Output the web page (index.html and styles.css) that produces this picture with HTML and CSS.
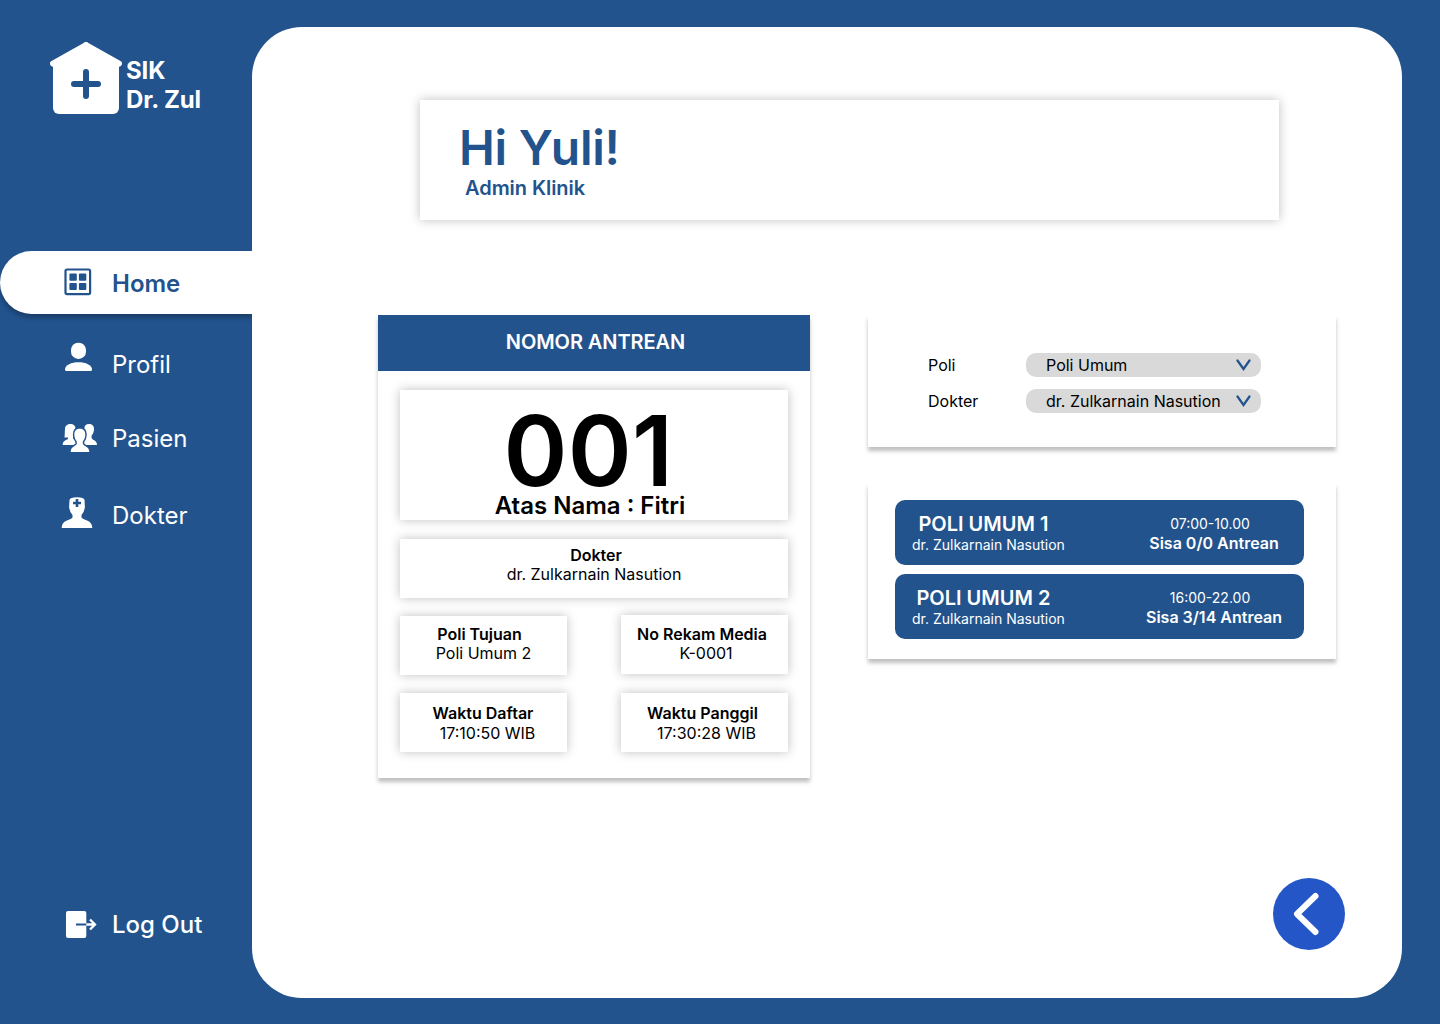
FILE: index.html
```html
<!DOCTYPE html>
<html lang="id">
<head>
<meta charset="utf-8">
<title>SIK Dr. Zul</title>
<link rel="stylesheet" href="styles.css">
</head>
<body>
<div class="app">
  <aside class="sidebar">
    <div class="logo">
      <svg width="72" height="72" viewBox="0 0 72 72"><path d="M36 3 69 21.500M36 3 3 21.500" stroke="#fff" stroke-width="6" stroke-linecap="round"/><path d="M36 2 69 20v46a6 6 0 0 1-6 6H9a6 6 0 0 1-6-6V20Z" fill="#fff"/><path d="M36 30v24M24 42h24" stroke="#22538d" stroke-width="6" stroke-linecap="round"/></svg>
      <div class="logo-text">SIK<br>Dr. Zul</div>
    </div>
    <nav class="nav">
      <a class="nav-item active">
        <svg class="icon" width="36" height="36" viewBox="0 0 36 36"><rect x="5.500" y="4.500" width="24.600" height="24.600" rx="1.500" fill="none" stroke="#22538d" stroke-width="2.200"/><g fill="#22538d"><rect x="9.400" y="8.500" width="7.400" height="7.200" rx="1"/><rect x="18.900" y="8.500" width="7.400" height="7.200" rx="1"/><rect x="9.400" y="17.900" width="7.400" height="7.200" rx="1"/><rect x="18.900" y="17.900" width="7.400" height="7.200" rx="1"/></g></svg>
        <span>Home</span>
      </a>
      <a class="nav-item profile">
        <svg class="icon" width="36" height="36" viewBox="0 0 36 36"><g fill="#fff"><rect x="11" y="2.700" width="15" height="16.300" rx="7.300"/><path d="M5 29.500C5 25 11.500 22.300 18.500 22.300S32 25 32 29.500Q32 31 30.500 31H6.500Q5 31 5 29.500Z"/></g></svg>
        <span>Profil</span>
      </a>
      <a class="nav-item patient">
        <svg class="icon wide" width="38" height="36" viewBox="0 0 38 36"><g fill="#fff"><path d="M5 9C5 5.500 7.500 4 10.500 4S15.500 5.500 15.500 9C15.500 12 14.500 14 13 15.500V18C14 20 18 20 18 25H2.700C2.700 21 6 20 8 19V17.500H4.500C5 14 4.600 12 5 9Z"/><path d="M24.300 9C24.300 5.500 26 4 29 4S34 5.500 34 9C34 12 33 14 31.600 15.500V18C32.500 20.500 37 20 37 25H22V18Z"/><path d="M14.300 14.500C14.300 10.500 16.500 8.700 19.800 8.700S25.300 10.500 25.300 14.500C25.300 17.500 24.300 19.700 22.800 21.400V24C24.300 26.500 29.300 26.500 29.300 32H10.700C10.700 26.500 15.300 26.500 16.800 24V21.400C15.300 19.700 14.300 17.500 14.300 14.500Z" stroke="#22538d" stroke-width="3" paint-order="stroke"/></g></svg>
        <span>Pasien</span>
      </a>
      <a class="nav-item doctor">
        <svg class="icon" width="36" height="36" viewBox="0 0 36 36"><path d="M9.500 5Q10 2.300 17 2.300T24.500 5L24.900 12Q24.500 16.500 21.500 20V22.500C23.500 25.500 32.300 24.500 32.300 33H1.700C1.700 24.500 10.500 25.500 12.500 22.500V20Q9.500 16.500 9.100 12Z" fill="#fff"/><path d="M17 4v8M13 8h8" stroke="#22538d" stroke-width="2.600"/></svg>
        <span>Dokter</span>
      </a>
    </nav>
    <a class="nav-item logout">
      <svg class="icon" width="37" height="36" viewBox="0 0 37 36"><rect x="6" y="5" width="20.300" height="27" rx="2" fill="#fff"/><path d="M16 18.500h10.300" stroke="#22538d" stroke-width="2"/><path d="M26.300 18.500h9M30 13.500l5 5-5 5" fill="none" stroke="#fff" stroke-width="2.300"/></svg>
      <span>Log Out</span>
    </a>
  </aside>
  <main class="panel">
    <header class="greeting">
      <h1>Hi Yuli!</h1>
      <p>Admin Klinik</p>
    </header>
    <div class="columns">
      <section class="ticket">
        <h2>NOMOR ANTREAN</h2>
        <div class="ticket-body">
          <div class="box number"><div class="digits">001</div><div class="owner">Atas Nama : Fitri</div></div>
          <div class="box doctor-box"><b>Dokter</b><span>dr. Zulkarnain Nasution</span></div>
          <div class="box clinic"><b>Poli Tujuan</b><span>Poli Umum 2</span></div>
          <div class="box record"><b>No Rekam Media</b><span>K-0001</span></div>
          <div class="box registered"><b>Waktu Daftar</b><span>17:10:50 WIB</span></div>
          <div class="box called"><b>Waktu Panggil</b><span>17:30:28 WIB</span></div>
        </div>
      </section>
      <div class="side">
        <section class="filters">
          <div class="field"><label>Poli</label><div class="select"><span>Poli Umum</span><svg width="15" height="12" viewBox="0 0 15 12"><path d="M1.500 1.500 7.500 10l6-8.500" fill="none" stroke="#22538d" stroke-width="2.200" stroke-linecap="round"/></svg></div></div>
          <div class="field"><label>Dokter</label><div class="select"><span>dr. Zulkarnain Nasution</span><svg width="15" height="12" viewBox="0 0 15 12"><path d="M1.500 1.500 7.500 10l6-8.500" fill="none" stroke="#22538d" stroke-width="2.200" stroke-linecap="round"/></svg></div></div>
        </section>
        <section class="schedule">
          <div class="slot"><div class="slot-info"><b>POLI UMUM 1</b><span>dr. Zulkarnain Nasution</span></div><div class="slot-queue"><span>07:00-10.00</span><b>Sisa 0/0 Antrean</b></div></div>
          <div class="slot"><div class="slot-info"><b>POLI UMUM 2</b><span>dr. Zulkarnain Nasution</span></div><div class="slot-queue"><span>16:00-22.00</span><b>Sisa 3/14 Antrean</b></div></div>
        </section>
      </div>
    </div>
    <button class="back" aria-label="Kembali"><svg width="72" height="72" viewBox="0 0 72 72"><path d="M42.500 18 24 36l18.500 18" fill="none" stroke="#fff" stroke-width="6" stroke-linecap="round" stroke-linejoin="round"/></svg></button>
  </main>
</div>
</body>
</html>
```
FILE: styles.css
```css
* { box-sizing: border-box; margin: 0; padding: 0; }
body { font: 400 16px/19px Inter, sans-serif; color: #000; background: #22538d; }
b { font-weight: 600; }
svg { display: block; flex: none; }
.app { display: flex; height: 1024px; overflow: hidden; }

.sidebar { width: 252px; flex: none; display: flex; flex-direction: column; color: #fff; }
.logo { display: flex; gap: 4px; padding: 42px 0 0 50px; height: 251px; }
.logo-text { font-size: 24px; line-height: 29px; font-weight: 700; letter-spacing: -.15px; padding-top: 14px; white-space: nowrap; }
.nav-item { display: flex; align-items: flex-start; gap: 16px; padding-left: 60px; font-size: 24px; line-height: 29px; font-weight: 400; }
.nav-item.active { height: 63px; padding-top: 14px; background: #fff; color: #22538d; font-weight: 600; border-radius: 32px 0 0 32px; box-shadow: 0 4px 4px rgba(0, 0, 0, .25); }
.active span { padding-top: 4px; }
.profile { margin-top: 26px; }
.profile span { padding-top: 10px; }
.patient { margin-top: 41px; }
.patient span { padding-top: 4px; }
.icon.wide { margin-right: -2px; }
.doctor { margin-top: 39px; }
.doctor span { padding-top: 6px; }
.logout { margin-top: auto; height: 118px; gap: 15px; font-weight: 500; }
.logout span { padding-top: 4px; }

.panel { position: relative; width: 1150px; height: 971px; margin-top: 27px; background: #fff; border-radius: 50px; padding: 73px 66px 0 126px; }
.greeting { width: 859px; height: 120px; margin-left: 42px; padding: 19px 0 0 39px; color: #22538d; box-shadow: 0 0 10px rgba(0, 0, 0, .25); }
.greeting h1 { font-size: 48px; line-height: 58px; font-weight: 600; letter-spacing: -.25px; }
.greeting p { font-size: 20px; line-height: 22px; font-weight: 600; padding-left: 6px; letter-spacing: -.05px; }
.columns { display: flex; align-items: flex-start; gap: 58px; margin-top: 95px; }

.ticket { width: 432px; height: 463px; box-shadow: 0 4px 4px rgba(0, 0, 0, .25); }
.ticket h2 { height: 56px; padding: 15px 0 0 3px; background: #22538d; color: #fff; font-size: 20px; line-height: 24px; font-weight: 600; letter-spacing: -.08px; text-align: center; }
.ticket-body { display: grid; grid-template-columns: 167px 167px; grid-template-rows: 130px 59px 60px 59px; column-gap: 54px; row-gap: 18px; padding: 19px 22px 0; }
.box { display: flex; flex-direction: column; align-items: center; height: 59px; padding-top: 9px; box-shadow: 0 0 10px rgba(0, 0, 0, .25); white-space: nowrap; }
.number { grid-column: 1 / 3; height: 130px; padding: 2px 8px 0 0; font-weight: 600; }
.digits { font-size: 97px; line-height: 101px; padding-top: 8px; height: 99px; letter-spacing: .3px; margin-left: -3px; }
.owner { font-size: 24px; line-height: 29px; }
.doctor-box { grid-column: 1 / 3; padding-top: 7px; margin-top: 1px; }
.doctor-box b { padding-left: 4px; }
.clinic { margin-top: 1px; padding-right: 8px; }
.clinic span { padding-left: 8px; }
.record { padding: 10px 5px 0 0; }
.record span { padding-left: 8px; }
.registered, .called { padding-top: 11px; gap: 1px; }
.registered { padding-right: 1px; }
.registered span { padding-left: 9px; }
.called { padding-right: 4px; }
.called span { padding-left: 8px; }

.side { display: flex; flex-direction: column; gap: 36px; width: 468px; }
.filters, .schedule { box-shadow: 0 4px 4px rgba(0, 0, 0, .25); }
.filters { display: flex; flex-direction: column; gap: 12px; height: 132px; padding: 38px 75px 0 60px; }
.field { display: flex; align-items: center; }
.field label { width: 98px; }
.select { display: flex; align-items: center; justify-content: space-between; width: 235px; height: 24px; padding: 0 10px 0 20px; border-radius: 10px; background: #d9d9d9; white-space: nowrap; }
.schedule { display: flex; flex-direction: column; gap: 9px; height: 176px; padding: 17px 32px 0 27px; }
.slot { display: flex; justify-content: space-between; height: 65px; padding: 0 20px 0 17px; border-radius: 10px; background: #22538d; color: #fff; white-space: nowrap; }
.slot-info, .slot-queue { display: flex; flex-direction: column; align-items: center; }
.slot-info { padding-top: 12px; }
.slot-info b { font-size: 20px; line-height: 24px; padding-right: 10px; }
.slot span { font-size: 14px; line-height: 17px; font-weight: 400; }
.slot-queue { width: 140px; padding-top: 15px; }
.slot-queue span { padding-right: 8px; }
.slot-queue b { line-height: 20px; padding-top: 1px; }
.back { position: absolute; right: 57px; bottom: 48px; width: 72px; height: 72px; border: 0; border-radius: 50%; background: #2456c7; }
```
